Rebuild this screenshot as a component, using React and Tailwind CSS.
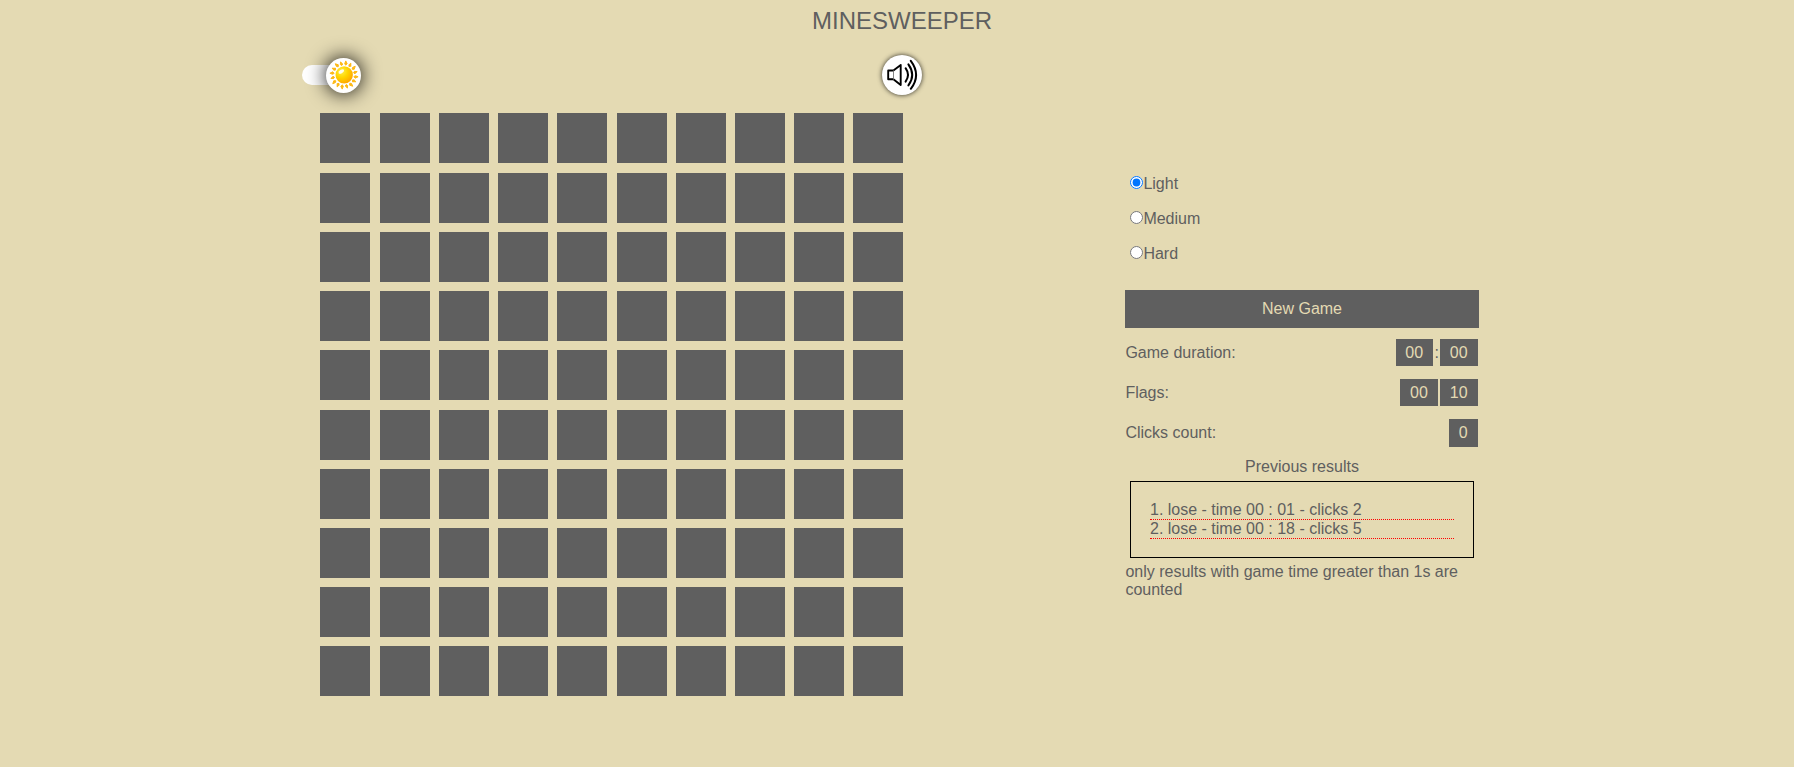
const CELLS = Array.from({ length: 100 }, (_, i) => i);
const RAYS = Array.from({ length: 16 }, (_, i) => i * 22.5);

function SunIcon() {
  return (
    <svg viewBox="0 0 30 30" className="size-[30px]">
      <defs>
        <radialGradient id="sun" cx="0.35" cy="0.3" r="0.8">
          <stop offset="0" stopColor="#fff04a" />
          <stop offset="0.45" stopColor="#ffd500" />
          <stop offset="1" stopColor="#ff9d00" />
        </radialGradient>
      </defs>
      {RAYS.map((a, i) => (
        <path
          key={a}
          d={i % 2 ? 'M14.9 5.2 L13.7 4 L14.5 1.5 L16.2 4 Z' : 'M14.9 5 L13.7 3.6 L14.3 0.8 L16.2 3.4 Z'}
          fill="#fdb813"
          stroke="#fdb813"
          strokeWidth="0.9"
          strokeLinejoin="round"
          transform={`rotate(${a + 10} 15 15)`}
        />
      ))}
      <circle cx="15.2" cy="14.9" r="8.7" fill="url(#sun)" />
      <ellipse cx="12.3" cy="11.5" rx="3.1" ry="1.7" fill="#fff" opacity="0.9" transform="rotate(-32 12.3 11.5)" />
    </svg>
  );
}

function SoundIcon() {
  return (
    <svg viewBox="0 0 40 40" className="size-10" fill="none" stroke="#000" strokeLinecap="round" strokeLinejoin="round">
      <path d="M6.2 15.5H11.4L18.7 9.9V30L11.4 24.3H6.2Z" strokeWidth="1.9" />
      <path d="M11.5 15.8V24.2" stroke="#777" strokeWidth="0.9" />
      <path d="M23.6 13.2Q28.4 20 23.6 26.6" strokeWidth="2" />
      <path d="M26.4 9.4Q34 20 26.4 30.4" strokeWidth="2" />
      <path d="M28.8 5.8Q39.4 20 28.8 33.8" strokeWidth="2" />
    </svg>
  );
}

function Level({ label, checked }) {
  return (
    <label className="flex h-[35px] items-center">
      <input type="radio" name="level" defaultChecked={checked} className="relative -top-px m-0 size-[13px]" />
      <span className="pl-[0.4px]">{label}</span>
    </label>
  );
}

function Count({ children }) {
  return <span className="flex min-h-[27px] items-start bg-[#5f5f5f] pt-[5px] pr-[10.4px] pl-[9.6px] text-[#e4dab3]">{children}</span>;
}

function Stat({ label, children }) {
  return (
    <div className="flex h-10 items-start justify-between pr-px pl-[0.4px]">
      <span className="pt-[5px]">{label}</span>
      <div className="flex">{children}</div>
    </div>
  );
}

export default function App() {
  return (
    <div className="h-[767px] w-full overflow-hidden bg-[#e4dab3] font-['Liberation_Sans',Arial,sans-serif] text-[16px] leading-[18px] text-[#5f5f5f]">
      <h1 className="flex h-[55px] justify-center pt-[7px] pl-[10px] text-[24px] leading-[27px]">MINESWEEPER</h1>
      <div className="flex pl-[302px]">
        <main className="w-[620px]">
          <div className="flex h-10 items-center justify-between">
            <button className="flex h-5 w-[50px] items-center rounded-full bg-white pl-6">
              <span className="flex size-[35px] shrink-0 items-center justify-center rounded-full bg-white shadow-[0_0_20px_rgba(0,0,0,1)]">
                <SunIcon />
              </span>
            </button>
            <button className="size-10 rounded-full bg-white shadow-[0_0_5px_rgba(0,0,0,0.8)]">
              <SoundIcon />
            </button>
          </div>
          <div className="ml-[18.45px] mt-[18.45px] grid w-max grid-cols-[repeat(10,50px)] gap-[9.22px]">
            {CELLS.map((i) => (
              <div key={i} className="h-[50px] bg-[#5f5f5f]" />
            ))}
          </div>
        </main>
        <aside className="ml-[203px] w-[354px] pt-[111px]">
          <div className="pl-[5px]">
            <Level label="Light" checked />
            <Level label="Medium" />
            <Level label="Hard" />
          </div>
          <button className="mt-[19px] flex h-[38px] w-full items-center justify-center bg-[#5f5f5f] text-[#e4dab3]">New Game</button>
          <div className="mt-[11px]">
            <Stat label="Game duration:">
              <Count>00</Count>
              <span className="w-[6.8px] pt-[5px] text-center">:</span>
              <Count>00</Count>
            </Stat>
            <Stat label="Flags:">
              <Count>00</Count>
              <span className="w-[2px]" />
              <Count>10</Count>
            </Stat>
            <Stat label="Clicks count:">
              <div className="flex h-7">
                <Count>0</Count>
              </div>
            </Stat>
          </div>
          <h2 className="-mt-px text-center">Previous results</h2>
          <div className="mx-[5px] mt-[5px] border border-black px-[19px] pt-[19px] pb-[18px]">
            <p className="border-b border-dotted border-[red]">1. lose - time 00 : 01 - clicks 2</p>
            <p className="border-b border-dotted border-[red]">2. lose - time 00 : 18 - clicks 5</p>
          </div>
          <p className="mt-[5px] pl-[0.4px]">only results with game time greater than 1s are counted</p>
        </aside>
      </div>
    </div>
  );
}
